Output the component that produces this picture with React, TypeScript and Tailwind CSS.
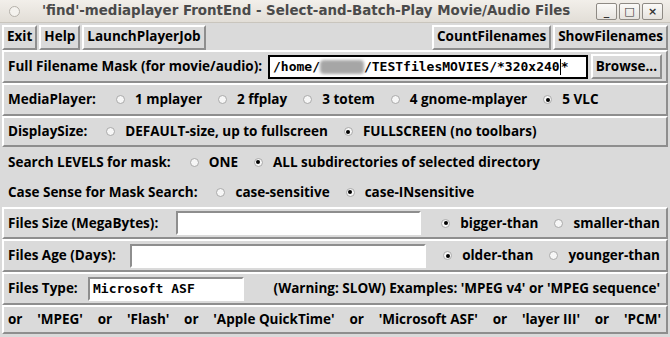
import React from "react";

const raised = "border-2 border-t-white border-l-white border-r-[#8e8e8e] border-b-[#8e8e8e]";
const sunken = "border-2 border-t-[#8e8e8e] border-l-[#8e8e8e] border-r-white border-b-white";

function TkButton({ label, className = "" }: { label: string; className?: string }) {
  return (
    <div className={`h-[25px] px-[3px] flex items-center bg-[#dadada] ${raised} ${className}`}>
      <span className="leading-none">{label}</span>
    </div>
  );
}

function Radio({ label, checked = false }: { label: string; checked?: boolean }) {
  return (
    <div className="flex items-center gap-[10px]">
      <span className="w-[9px] h-[9px] rounded-full bg-[#f6f6f6] border border-[#a9a9a9] flex items-center justify-center">
        {checked && <span className="w-[4px] h-[4px] rounded-full bg-black" />}
      </span>
      <span>{label}</span>
    </div>
  );
}

function Entry({ children, className = "", focused = false }: { children?: React.ReactNode; className?: string; focused?: boolean }) {
  return (
    <div className={`h-[24px] bg-white flex items-center px-[3px] font-['DejaVu_Sans_Mono',monospace] text-[13px] font-bold whitespace-pre ${focused ? "border-2 border-black" : sunken} ${className}`}>
      {children}
    </div>
  );
}

function Frame({ children, className = "" }: { children: React.ReactNode; className?: string }) {
  return <div className={`flex items-center px-[4px] bg-[#dadada] ${raised} ${className}`}>{children}</div>;
}

const examples = ["or", "'MPEG'", "or", "'Flash'", "or", "'Apple QuickTime'", "or", "'Microsoft ASF'", "or", "'layer III'", "or", "'PCM'"];

export default function App() {
  return (
    <div className="w-[670px] h-[337px] overflow-hidden bg-[#dadada] text-[13.5px] text-black font-['Open_Sans',sans-serif] font-bold">
      {/* title bar */}
      <div className="h-[23px] flex items-center bg-gradient-to-b from-[#f2efea] to-[#e2ded7] border-b border-[#c9c5bd]">
        <span className="ml-[9px] w-[11px] h-[11px] rounded-full border border-[#b5b1aa] bg-[#f4f2ee]" />
        <span className="ml-[22px] font-['DejaVu_Sans',sans-serif] text-[13.4px] text-[#4a4a4a]">
          'find'-mediaplayer FrontEnd - Select-and-Batch-Play Movie/Audio Files
        </span>
        <div className="ml-auto mr-[7px] flex gap-[2px]">
          {["_", "□", "×"].map((g) => (
            <span key={g} className="w-[21px] h-[17px] border border-[#8e8a84] rounded-[2px] bg-gradient-to-b from-[#fbfaf8] to-[#e6e3de] flex items-center justify-center text-[11px] leading-none text-[#333] font-['DejaVu_Sans',sans-serif]">
              {g}
            </span>
          ))}
        </div>
      </div>

      <div className="mx-[2px] flex flex-col">
        {/* button row */}
        <div className="h-[27px] flex items-center gap-[2px] pt-[1px]">
          <TkButton label="Exit" />
          <TkButton label="Help" />
          <TkButton label="LaunchPlayerJob" />
          <div className="flex-1" />
          <TkButton label="CountFilenames" />
          <TkButton label="ShowFilenames" />
        </div>

        <Frame className="h-[33px] gap-[3px]">
          <span className="w-[257px]">Full Filename Mask (for movie/audio):</span>
          <Entry focused className="flex-1">
            /home/
            <span className="w-[44px] h-[14px] rounded-[4px] bg-[#a6a6a6] blur-[1.5px]" />
            /TESTfilesMOVIES/*320x240
            <span className="w-[1px] h-[16px] bg-black" />*
          </Entry>
          <TkButton label="Browse..." />
        </Frame>

        <Frame className="h-[33px] gap-[16px]">
          <span className="mr-[4px]">MediaPlayer:</span>
          <Radio label="1 mplayer" />
          <Radio label="2 ffplay" />
          <Radio label="3 totem" />
          <Radio label="4 gnome-mplayer" />
          <Radio checked label="5 VLC" />
        </Frame>

        <Frame className="h-[31px] gap-[16px]">
          <span className="mr-[3px]">DisplaySize:</span>
          <Radio label="DEFAULT-size, up to fullscreen" />
          <Radio checked label="FULLSCREEN (no toolbars)" />
        </Frame>

        <div className="h-[30px] flex items-center px-[6px] gap-[16px]">
          <span className="mr-[3px]">Search LEVELS for mask:</span>
          <Radio label="ONE" />
          <Radio checked label="ALL subdirectories of selected directory" />
        </div>

        <div className="h-[30px] flex items-center px-[6px] gap-[16px]">
          <span className="mr-[3px]">Case Sense for Mask Search:</span>
          <Radio label="case-sensitive" />
          <Radio checked label="case-INsensitive" />
        </div>

        <Frame className="h-[32px] gap-[4px]">
          <span className="w-[164px]">Files Size (MegaBytes):</span>
          <Entry className="w-[245px]" />
          <div className="ml-auto flex items-center gap-[16px] mr-[2px]">
            <Radio checked label="bigger-than" />
            <Radio label="smaller-than" />
          </div>
        </Frame>

        <Frame className="h-[33px] gap-[4px]">
          <span className="w-[118px]">Files Age (Days):</span>
          <Entry className="w-[296px]" />
          <div className="ml-auto flex items-center gap-[16px] mr-[2px]">
            <Radio checked label="older-than" />
            <Radio label="younger-than" />
          </div>
        </Frame>

        <Frame className="h-[33px] gap-[4px]">
          <span className="w-[76px]">Files Type:</span>
          <Entry className="w-[156px]">Microsoft ASF</Entry>
          <span className="ml-auto mr-[2px] whitespace-pre">(Warning: SLOW) Examples: 'MPEG v4' or 'MPEG sequence'</span>
        </Frame>

        <Frame className="h-[29px] justify-between pr-[5px]">
          {examples.map((w, i) => (
            <span key={i} className="whitespace-pre">{w}</span>
          ))}
        </Frame>
      </div>
    </div>
  );
}
